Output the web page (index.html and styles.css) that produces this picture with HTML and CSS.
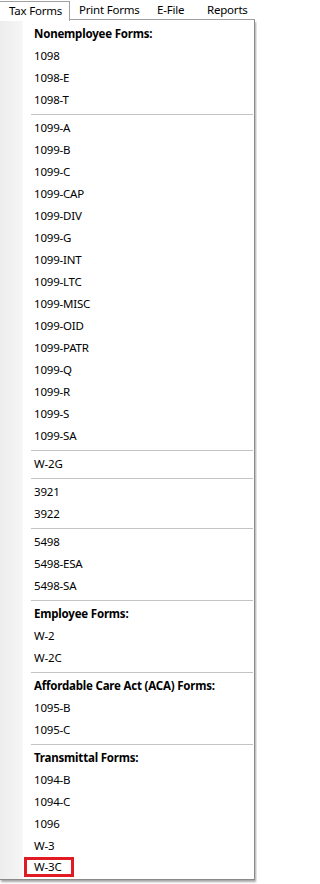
FILE: index.html
```html
<!DOCTYPE html>
<html>
<head>
<meta charset="utf-8">
<link rel="stylesheet" href="styles.css">
</head>
<body>
<div class="frame">
  <div class="menubar">
    <div class="tab">Tax Forms</div>
    <div class="rest">
      <span class="mi mi-print">Print Forms</span>
      <span class="mi mi-efile">E-File</span>
      <span class="mi mi-reports">Reports</span>
    </div>
  </div>
  <div class="dropdown">
    <div class="row head">Nonemployee Forms:</div>
    <div class="row">1098</div>
    <div class="row">1098-E</div>
    <div class="row">1098-T</div>
    <div class="sep"></div>
    <div class="row">1099-A</div>
    <div class="row">1099-B</div>
    <div class="row">1099-C</div>
    <div class="row">1099-CAP</div>
    <div class="row">1099-DIV</div>
    <div class="row">1099-G</div>
    <div class="row">1099-INT</div>
    <div class="row">1099-LTC</div>
    <div class="row">1099-MISC</div>
    <div class="row">1099-OID</div>
    <div class="row">1099-PATR</div>
    <div class="row">1099-Q</div>
    <div class="row">1099-R</div>
    <div class="row">1099-S</div>
    <div class="row">1099-SA</div>
    <div class="sep"></div>
    <div class="row">W-2G</div>
    <div class="sep"></div>
    <div class="row">3921</div>
    <div class="row">3922</div>
    <div class="sep"></div>
    <div class="row">5498</div>
    <div class="row">5498-ESA</div>
    <div class="row">5498-SA</div>
    <div class="sep"></div>
    <div class="row head">Employee Forms:</div>
    <div class="row">W-2</div>
    <div class="row">W-2C</div>
    <div class="sep"></div>
    <div class="row head">Affordable Care Act (ACA) Forms:</div>
    <div class="row">1095-B</div>
    <div class="row">1095-C</div>
    <div class="sep"></div>
    <div class="row head">Transmittal Forms:</div>
    <div class="row">1094-B</div>
    <div class="row">1094-C</div>
    <div class="row">1096</div>
    <div class="row">W-3</div>
    <div class="row"><span class="highlight">W-3C</span></div>
  </div>
</div>
</body>
</html>
```

FILE: styles.css
```css
html, body {
  margin: 0;
  padding: 0;
  background: #ffffff;
}

body {
  width: 257px;
  height: 884px;
  overflow: hidden;
  font-family: "Noto Sans", "Open Sans", "Liberation Sans", sans-serif;
  font-size: 11.5px;
  letter-spacing: -0.2px;
  color: #000;
}

.frame {
  width: 255px;
}

.menubar {
  display: flex;
  height: 20px;
  background: #fff;
}

.tab {
  box-sizing: border-box;
  width: 70px;
  height: 20px;
  margin-top: 1px;
  padding-left: 9px;
  border-top: 1px solid #a0a0a0;
  border-right: 1px solid #a0a0a0;
  line-height: 17px;
  background: #fff;
}

.rest {
  flex: 1;
  display: flex;
  box-sizing: border-box;
  border-bottom: 1px solid #a0a0a0;
  height: 20px;
  line-height: 19px;
  padding-left: 9px;
}

.mi-print { width: 78px; }
.mi-efile { width: 50px; }

.dropdown {
  box-sizing: border-box;
  width: 255px;
  padding: 2px 0 1px 0;
  border-right: 1px solid #8a8a8a;
  border-bottom: 1px solid #8a8a8a;
  background: linear-gradient(to right, #ededed 0, #f5f5f5 22px, #ffffff 23px);
  box-shadow: 1px 2px 2px rgba(0, 0, 0, 0.35);
}

.row {
  height: 22px;
  display: flex;
  align-items: center;
  padding-left: 34px;
  white-space: nowrap;
}

.head {
  font-weight: bold;
}

.sep {
  height: 1px;
  margin: 4px 1px 1px 31px;
  background: #c4c4c4;
}

.highlight {
  display: inline-block;
  margin-left: -10px;
  padding: 0 10px 0 7px;
  line-height: 14px;
  border: 3px solid #e01b24;
}
```
